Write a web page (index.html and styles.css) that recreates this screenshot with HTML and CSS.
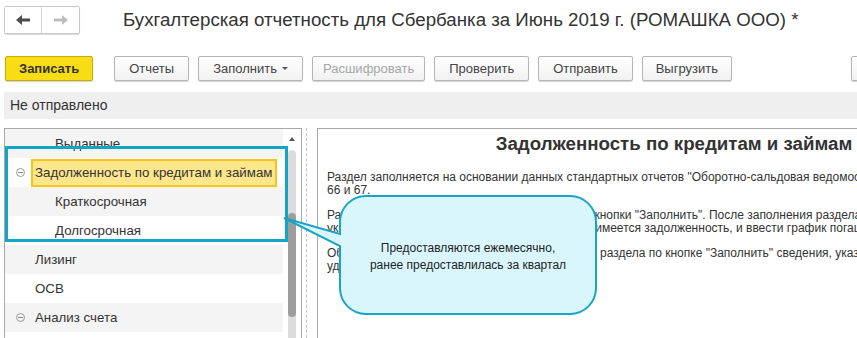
FILE: index.html
```html
<!DOCTYPE html>
<html lang="ru">
<head>
  <meta charset="UTF-8" />
  <title>Бухгалтерская отчетность для Сбербанка</title>
  <link rel="stylesheet" href="styles.css">
</head>
<body>
  <div class="window">
    <div class="titlebar">
      <div class="nav">
        <button class="nav-btn">
          <svg width="16" height="12" viewBox="0 0 16 12"><path d="M1 6 L7 1 V4.5 H15 V7.5 H7 V11 Z" fill="#4b4b4b"/></svg>
        </button>
        <button class="nav-btn nav-btn-off">
          <svg width="16" height="12" viewBox="0 0 16 12"><path d="M15 6 L9 1 V4.5 H1 V7.5 H9 V11 Z" fill="#bdbdbd"/></svg>
        </button>
      </div>
      <h1 class="title">Бухгалтерская отчетность для Сбербанка за Июнь 2019 г. (РОМАШКА ООО) *</h1>
    </div>

    <div class="toolbar">
      <button class="btn btn-primary">Записать</button>
      <button class="btn btn-gap">Отчеты</button>
      <button class="btn">Заполнить <span class="caret"></span></button>
      <button class="btn btn-disabled">Расшифровать</button>
      <button class="btn">Проверить</button>
      <button class="btn">Отправить</button>
      <button class="btn btn-narrow">Выгрузить</button>
      <button class="btn btn-more">Ещё</button>
    </div>

    <div class="status">Не отправлено</div>

    <div class="workspace">
      <div class="tree-panel">
        <div class="tree-list">
          <div class="tree-row shade level-1">Выданные</div>
          <div class="tree-row level-0 has-icon">
            <span class="toggle"></span>
            <span class="tree-label selected">Задолженность по кредитам и займам</span>
          </div>
          <div class="tree-row shade level-1">Краткосрочная</div>
          <div class="tree-row level-1">Долгосрочная</div>
          <div class="tree-row shade level-0">Лизинг</div>
          <div class="tree-row level-0">ОСВ</div>
          <div class="tree-row shade level-0 has-icon">
            <span class="toggle"></span>
            <span class="tree-label">Анализ счета</span>
          </div>
          <div class="tree-row level-0"></div>
        </div>
        <div class="scrollbar">
          <span class="scroll-up"></span>
          <div class="scroll-track"><div class="scroll-thumb"></div></div>
        </div>
      </div>
      <div class="splitter"></div>
      <div class="doc-panel">
        <h2 class="doc-title">Задолженность по кредитам и займам</h2>
        <p class="doc-text">Раздел заполняется на основании данных стандартных отчетов "Оборотно-сальдовая ведомость по счетам" 58, 60, 62,<br>66 и 67.</p>
        <p class="doc-text">Раздел заполняется автоматически с помощью кнопки "Заполнить". После заполнения раздела необходимо<br>указать данные о каждом кредите, по которому имеется задолженность, и ввести график погашения.</p>
        <p class="doc-text">Обратите внимание: при повторном заполнении раздела по кнопке "Заполнить" сведения, указанные вручную, будут<br>удалены.</p>
      </div>
    </div>

    <!-- выноска поверх формы -->
    <div class="mark-frame"></div>
    <div class="callout">
      <svg class="callout-shape" width="320" height="132" viewBox="0 0 320 132">
        <path d="M86 6 H290 A26 26 0 0 1 316 32 V98 A26 26 0 0 1 290 124 H86 A26 26 0 0 1 60 98 V56 L4 28 L60 44 V32 A26 26 0 0 1 86 6 Z"
              fill="#d9f6fd" stroke="#1aa3c2" stroke-width="2"/>
      </svg>
      <div class="callout-text">Предоставляются ежемесячно,<br>ранее предоставлилась за квартал</div>
    </div>
  </div>
</body>
</html>
```

FILE: styles.css
```css
* {
  margin: 0;
  padding: 0;
  box-sizing: border-box;
}

body {
  font-family: 'Liberation Sans', Arial, sans-serif;
  background: #fff;
  color: #333;
  width: 857px;
  height: 338px;
  overflow: hidden;
}

.window {
  position: relative;
  width: 857px;
  height: 338px;
  overflow: hidden;
}

/* Заголовок окна */
.titlebar {
  display: flex;
  align-items: center;
  padding: 5px 0 0 4px;
  height: 34px;
}

.nav {
  display: flex;
  height: 28px;
  border: 1px solid #c9c9c9;
  border-radius: 2px;
  box-shadow: 0 1px 1px rgba(0, 0, 0, 0.15);
  background: #fff;
}

.nav-btn {
  width: 37px;
  height: 26px;
  border: none;
  background: #fff;
  display: flex;
  align-items: center;
  justify-content: center;
}

.nav-btn:first-child {
  border-right: 1px solid #d6d6d6;
}

.title {
  margin-left: 43px;
  font-size: 18.7px;
  font-weight: normal;
  color: #333;
  white-space: nowrap;
}

/* Панель кнопок */
.toolbar {
  display: flex;
  align-items: center;
  gap: 9px;
  padding-left: 5px;
  margin-top: 22px;
  white-space: nowrap;
}

.btn {
  height: 25px;
  padding: 0 14px;
  border: 1px solid #b5b5b5;
  border-radius: 2px;
  background: linear-gradient(#ffffff, #f1f1f1);
  box-shadow: 0 1px 1px rgba(0, 0, 0, 0.18);
  font-family: inherit;
  font-size: 13px;
  color: #444;
  display: flex;
  align-items: center;
  flex-shrink: 0;
}

.btn-primary {
  background: #f8dc14;
  border-color: #c8ac06;
  font-weight: bold;
  color: #333;
  padding: 0 13px;
}

.btn-gap {
  margin-left: 12px;
}

.btn-disabled {
  color: #a6a6a6;
  padding: 0 10px;
}

.btn-narrow {
  padding: 0 13px;
}

.btn-more {
  margin-left: 110px;
}

.caret {
  margin-left: 5px;
  width: 0;
  height: 0;
  border-left: 3px solid transparent;
  border-right: 3px solid transparent;
  border-top: 3px solid #555;
}

/* Строка состояния */
.status {
  margin: 11px 0 0 4px;
  height: 27px;
  line-height: 27px;
  padding-left: 6px;
  background: #efefef;
  font-size: 14px;
  color: #333;
}

/* Рабочая область */
.workspace {
  display: flex;
  margin-top: 9px;
  padding-left: 4px;
  height: 220px;
}

.tree-panel {
  display: flex;
  flex: 0 0 298px;
  border: 1px solid #a8a8a8;
  border-bottom: none;
  overflow: hidden;
}

.tree-list {
  flex: 1;
}

.tree-row {
  display: flex;
  align-items: center;
  height: 29px;
  font-size: 13.3px;
  color: #333;
  white-space: nowrap;
}

.tree-row.shade {
  background: #f4f4f4;
}

.level-1 {
  padding-left: 50px;
}

.level-0 {
  padding-left: 30px;
}

.level-0.has-icon {
  padding-left: 11px;
}

.toggle {
  width: 9px;
  height: 9px;
  border: 1px solid #999;
  border-radius: 50%;
  position: relative;
  margin-right: 10px;
  flex-shrink: 0;
}

.toggle::after {
  content: "";
  position: absolute;
  left: 1px;
  right: 1px;
  top: 3px;
  height: 1px;
  background: #888;
}

.has-icon .tree-label.selected {
  margin-left: -4px;
}

.tree-label.selected {
  height: 28px;
  display: flex;
  align-items: center;
  padding: 0 3px 0 2px;
  background: #fde68b;
  border: 2px solid #f5c518;
}

.scrollbar {
  flex: 0 0 18px;
  display: flex;
  flex-direction: column;
  align-items: center;
}

.scroll-up {
  margin-top: 8px;
  width: 0;
  height: 0;
  border-left: 3px solid transparent;
  border-right: 3px solid transparent;
  border-bottom: 4px solid #555;
}

.scroll-track {
  margin-top: 9px;
  width: 8px;
  flex: 1;
  background: #dcdcdc;
  border-radius: 4px 4px 0 0;
}

.scroll-thumb {
  margin-top: 63px;
  height: 104px;
  background: #9d9d9d;
  border-radius: 4px;
}

.splitter {
  flex: 0 0 11px;
  margin-left: 4px;
  border-left: 1px dashed #c4c4c4;
}

.doc-panel {
  flex: 0 0 720px;
  border-top: 1px solid #a8a8a8;
  border-left: 1px solid #a8a8a8;
  padding: 4px 16px 0 9px;
}

.doc-title {
  text-align: center;
  font-size: 18.7px;
  font-weight: bold;
  color: #333;
  line-height: 22px;
  margin-bottom: 16px;
}

.doc-text {
  font-size: 12px;
  line-height: 13px;
  color: #333;
  white-space: nowrap;
  margin-bottom: 12px;
}

/* Выноска */
.mark-frame {
  position: absolute;
  left: 5px;
  top: 146px;
  width: 283px;
  height: 96px;
  border: 3px solid #14a5c5;
}

.callout {
  position: absolute;
  left: 280px;
  top: 190px;
  width: 320px;
  height: 132px;
}

.callout-shape {
  position: absolute;
  left: 0;
  top: 0;
}

.callout-text {
  position: relative;
  margin: 50px 0 0 60px;
  width: 256px;
  text-align: center;
  font-size: 12px;
  line-height: 17px;
  color: #222;
}
```
